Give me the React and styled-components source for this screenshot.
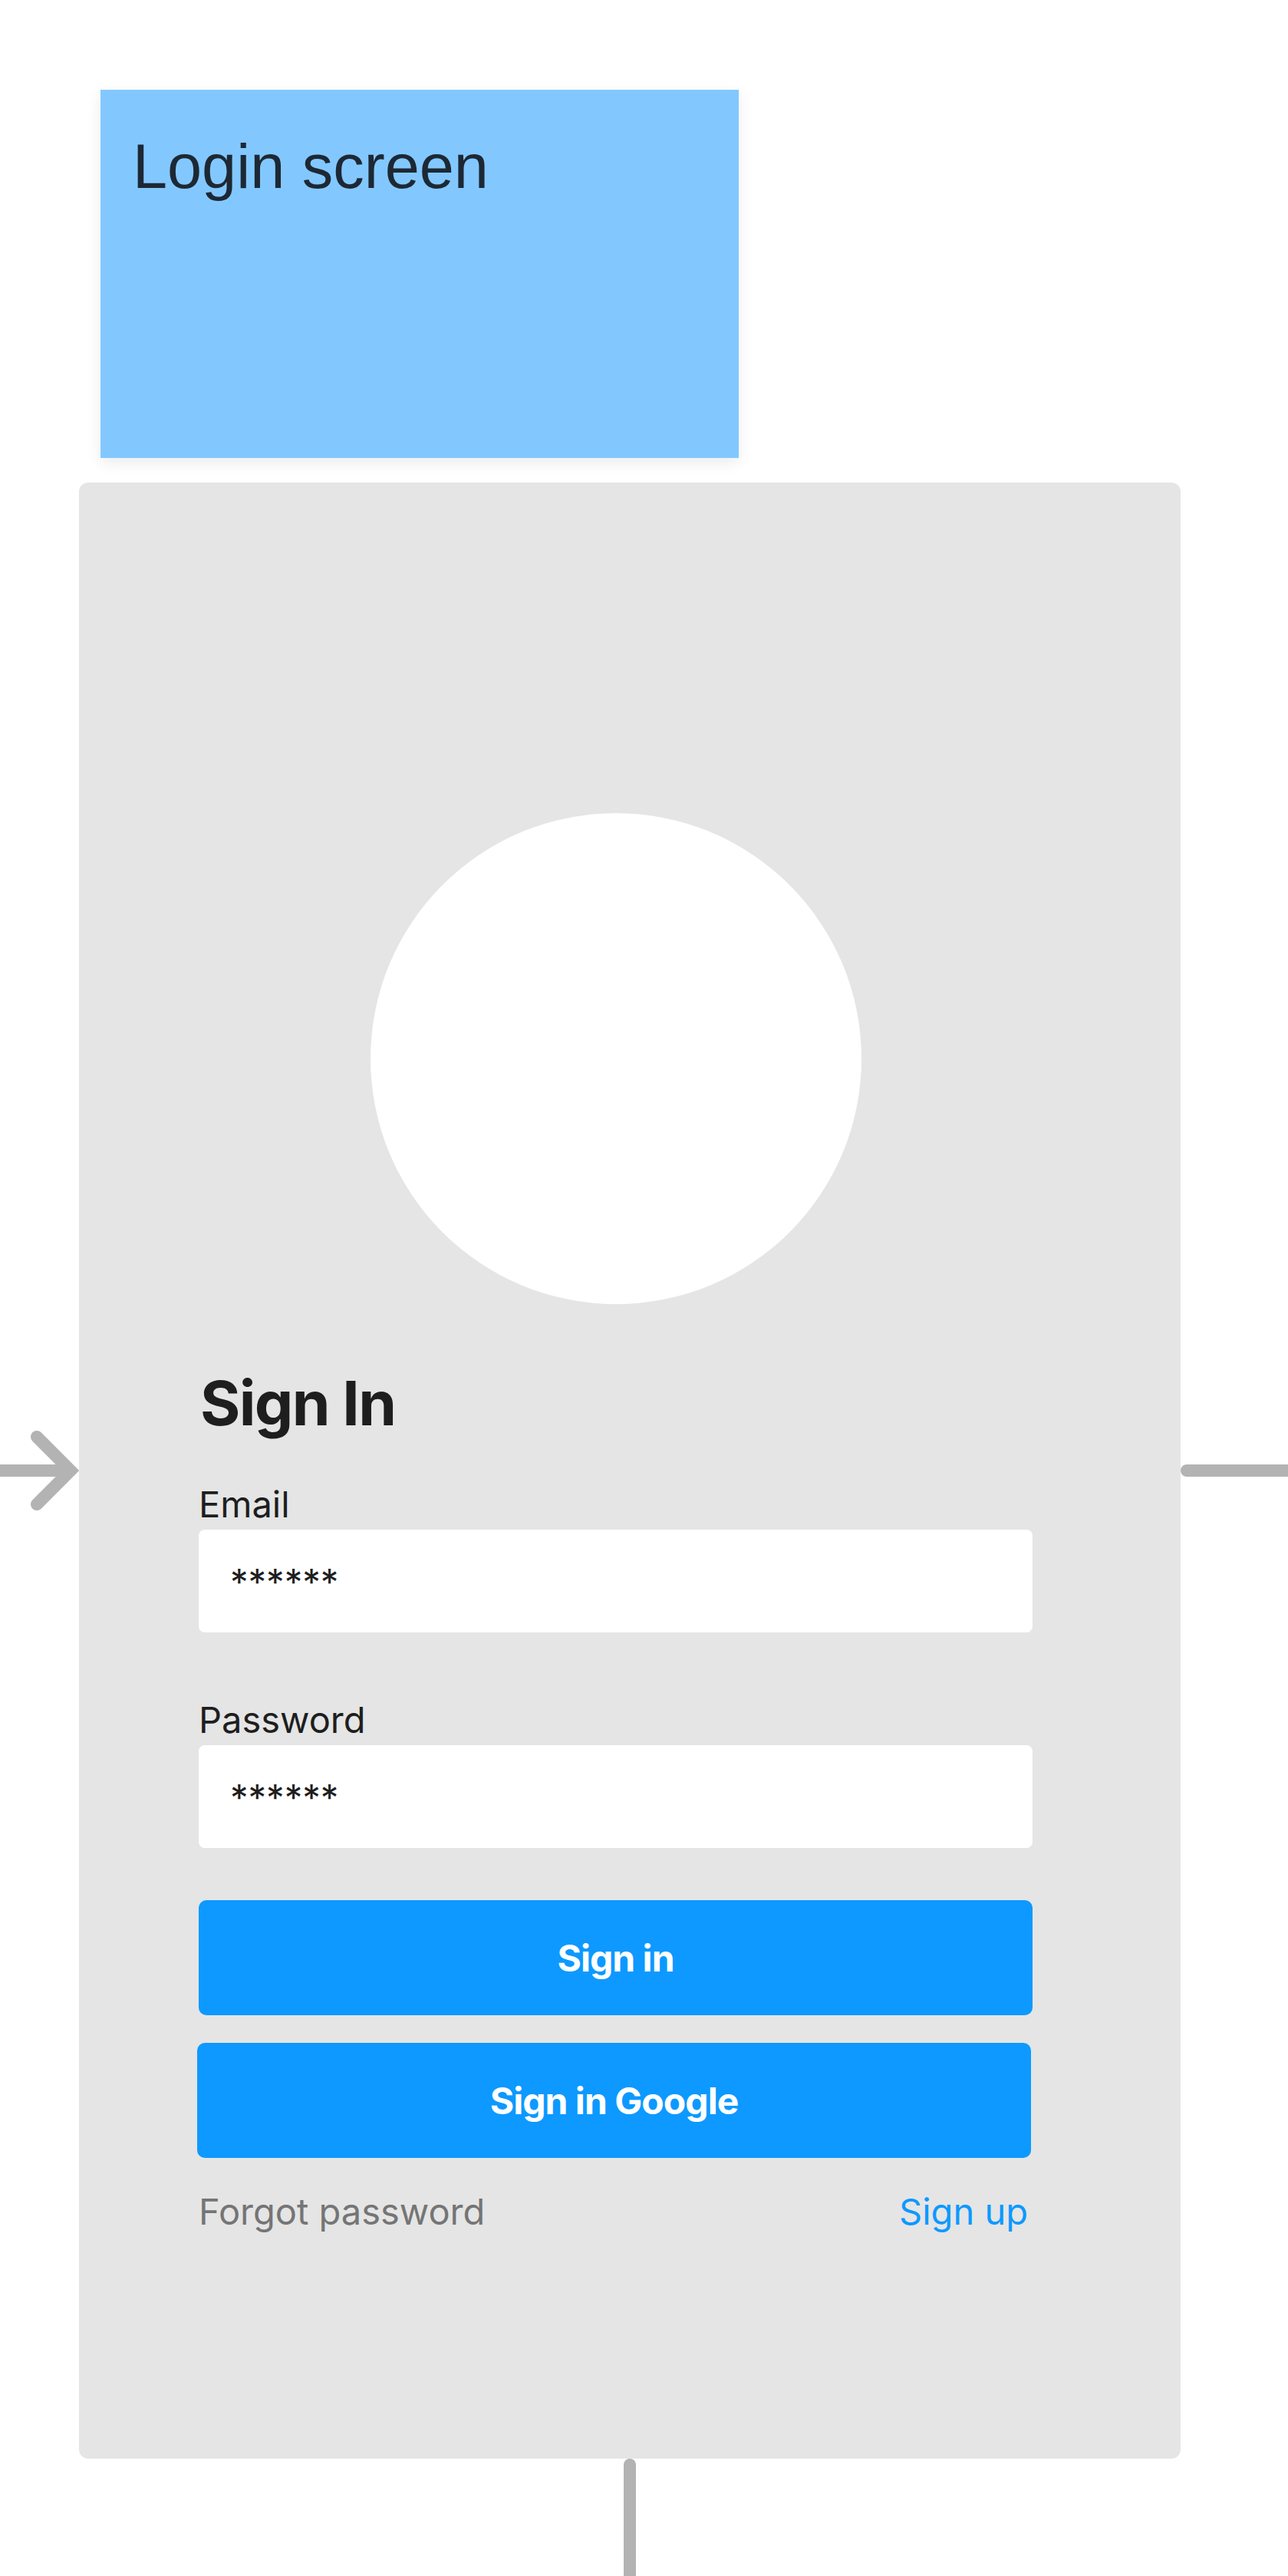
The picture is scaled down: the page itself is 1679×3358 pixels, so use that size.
import styled, { createGlobalStyle } from 'styled-components';

const GlobalStyle = createGlobalStyle`
  html, body {
    margin: 0;
    padding: 0;
    background: #ffffff;
  }
  body {
    width: 1679px;
    height: 3358px;
    overflow: hidden;
    font-family: Inter, "Noto Sans", sans-serif;
  }
`;

const ArrowIn = () => (
  <ArrowSvg viewBox="0 0 103 120" width="103" height="120">
    <line x1="-10" y1="60" x2="90" y2="60" stroke="#b3b3b3" strokeWidth="16" />
    <polyline
      points="48,16 92,60 48,104"
      fill="none"
      stroke="#b3b3b3"
      strokeWidth="16"
      strokeLinecap="round"
      strokeLinejoin="miter"
    />
  </ArrowSvg>
);

const App = () => {
  return (
    <Canvas>
      <GlobalStyle />
      <StickyNote>
        <NoteTitle>Login screen</NoteTitle>
      </StickyNote>

      <FrameRow>
        <ArrowIn />
        <LoginCard>
          <Avatar />
          <Heading>Sign In</Heading>

          <FieldLabel htmlFor="email">Email</FieldLabel>
          <FieldInput id="email" defaultValue="******" readOnly />

          <FieldLabel htmlFor="password" $gap={90}>Password</FieldLabel>
          <FieldInput id="password" defaultValue="******" readOnly />

          <PrimaryButton $gap={68}>Sign in</PrimaryButton>
          <PrimaryButton $gap={36} $shift={-2}>Sign in Google</PrimaryButton>

          <FooterRow>
            <FooterLink>Forgot password</FooterLink>
            <FooterLink $accent>Sign up</FooterLink>
          </FooterRow>
        </LoginCard>
        <ConnectorOut />
      </FrameRow>

      <StemRow>
        <ConnectorDown />
      </StemRow>
    </Canvas>
  );
};

export default App;

const Canvas = styled.div`
  display: flex;
  flex-direction: column;
  padding-top: 117px;
  width: 1679px;
`;

const StickyNote = styled.div`
  margin-left: 131px;
  width: 832px;
  height: 480px;
  box-sizing: border-box;
  padding: 60px 42px 0;
  background: #82c8ff;
  box-shadow: 0 6px 18px rgba(0, 0, 0, 0.08);
`;

const NoteTitle = styled.div`
  font-family: "Liberation Sans", Arial, sans-serif;
  font-size: 81px;
  line-height: 1;
  color: #1d2834;
`;

const FrameRow = styled.div`
  display: flex;
  align-items: center;
  margin-top: 32px;
`;

const ArrowSvg = styled.svg`
  display: block;
  flex: 0 0 103px;
`;

const LoginCard = styled.div`
  flex: 0 0 1436px;
  height: 2576px;
  box-sizing: border-box;
  padding: 431px 193px 0 156px;
  background: #e5e5e5;
  border-radius: 12px;
  display: flex;
  flex-direction: column;
`;

const ConnectorOut = styled.div`
  flex: 0 0 140px;
  height: 16px;
  background: #b3b3b3;
  border-radius: 8px 0 0 8px;
`;

const StemRow = styled.div`
  display: flex;
  justify-content: center;
  width: 1436px;
  margin-left: 103px;
`;

const ConnectorDown = styled.div`
  width: 16px;
  height: 160px;
  background: #b3b3b3;
  border-radius: 8px 8px 0 0;
`;

const Avatar = styled.div`
  align-self: center;
  width: 640px;
  height: 640px;
  border-radius: 50%;
  background: #ffffff;
`;

const Heading = styled.h1`
  margin: 89px 0 0 2px;
  font-size: 80px;
  line-height: 80px;
  font-weight: 700;
  letter-spacing: -0.02em;
  color: #1e1e1e;
`;

const FieldLabel = styled.label`
  display: block;
  margin-top: ${(p) => p.$gap ?? 68}px;
  font-size: 47px;
  line-height: 47px;
  color: #1e1e1e;
`;

const FieldInput = styled.input`
  margin-top: 10px;
  height: 134px;
  box-sizing: border-box;
  padding: 0 41px;
  border: none;
  border-radius: 8px;
  background: #ffffff;
  font-family: Inter, "Noto Sans", sans-serif;
  font-size: 47px;
  color: #1e1e1e;
  outline: none;
`;

const PrimaryButton = styled.button`
  margin-top: ${(p) => p.$gap}px;
  margin-left: ${(p) => p.$shift ?? 0}px;
  margin-right: ${(p) => -(p.$shift ?? 0)}px;
  height: 150px;
  border: none;
  border-radius: 10px;
  background: #0d99ff;
  color: #ffffff;
  font-family: Inter, "Noto Sans", sans-serif;
  font-size: 48px;
  font-weight: 700;
  letter-spacing: -0.02em;
  cursor: pointer;
`;

const FooterRow = styled.div`
  display: flex;
  justify-content: space-between;
  margin-top: 46px;
  padding-right: 6px;
`;

const FooterLink = styled.a`
  font-size: 47px;
  line-height: 47px;
  color: ${(p) => (p.$accent ? '#0d99ff' : '#757575')};
  cursor: pointer;
`;
